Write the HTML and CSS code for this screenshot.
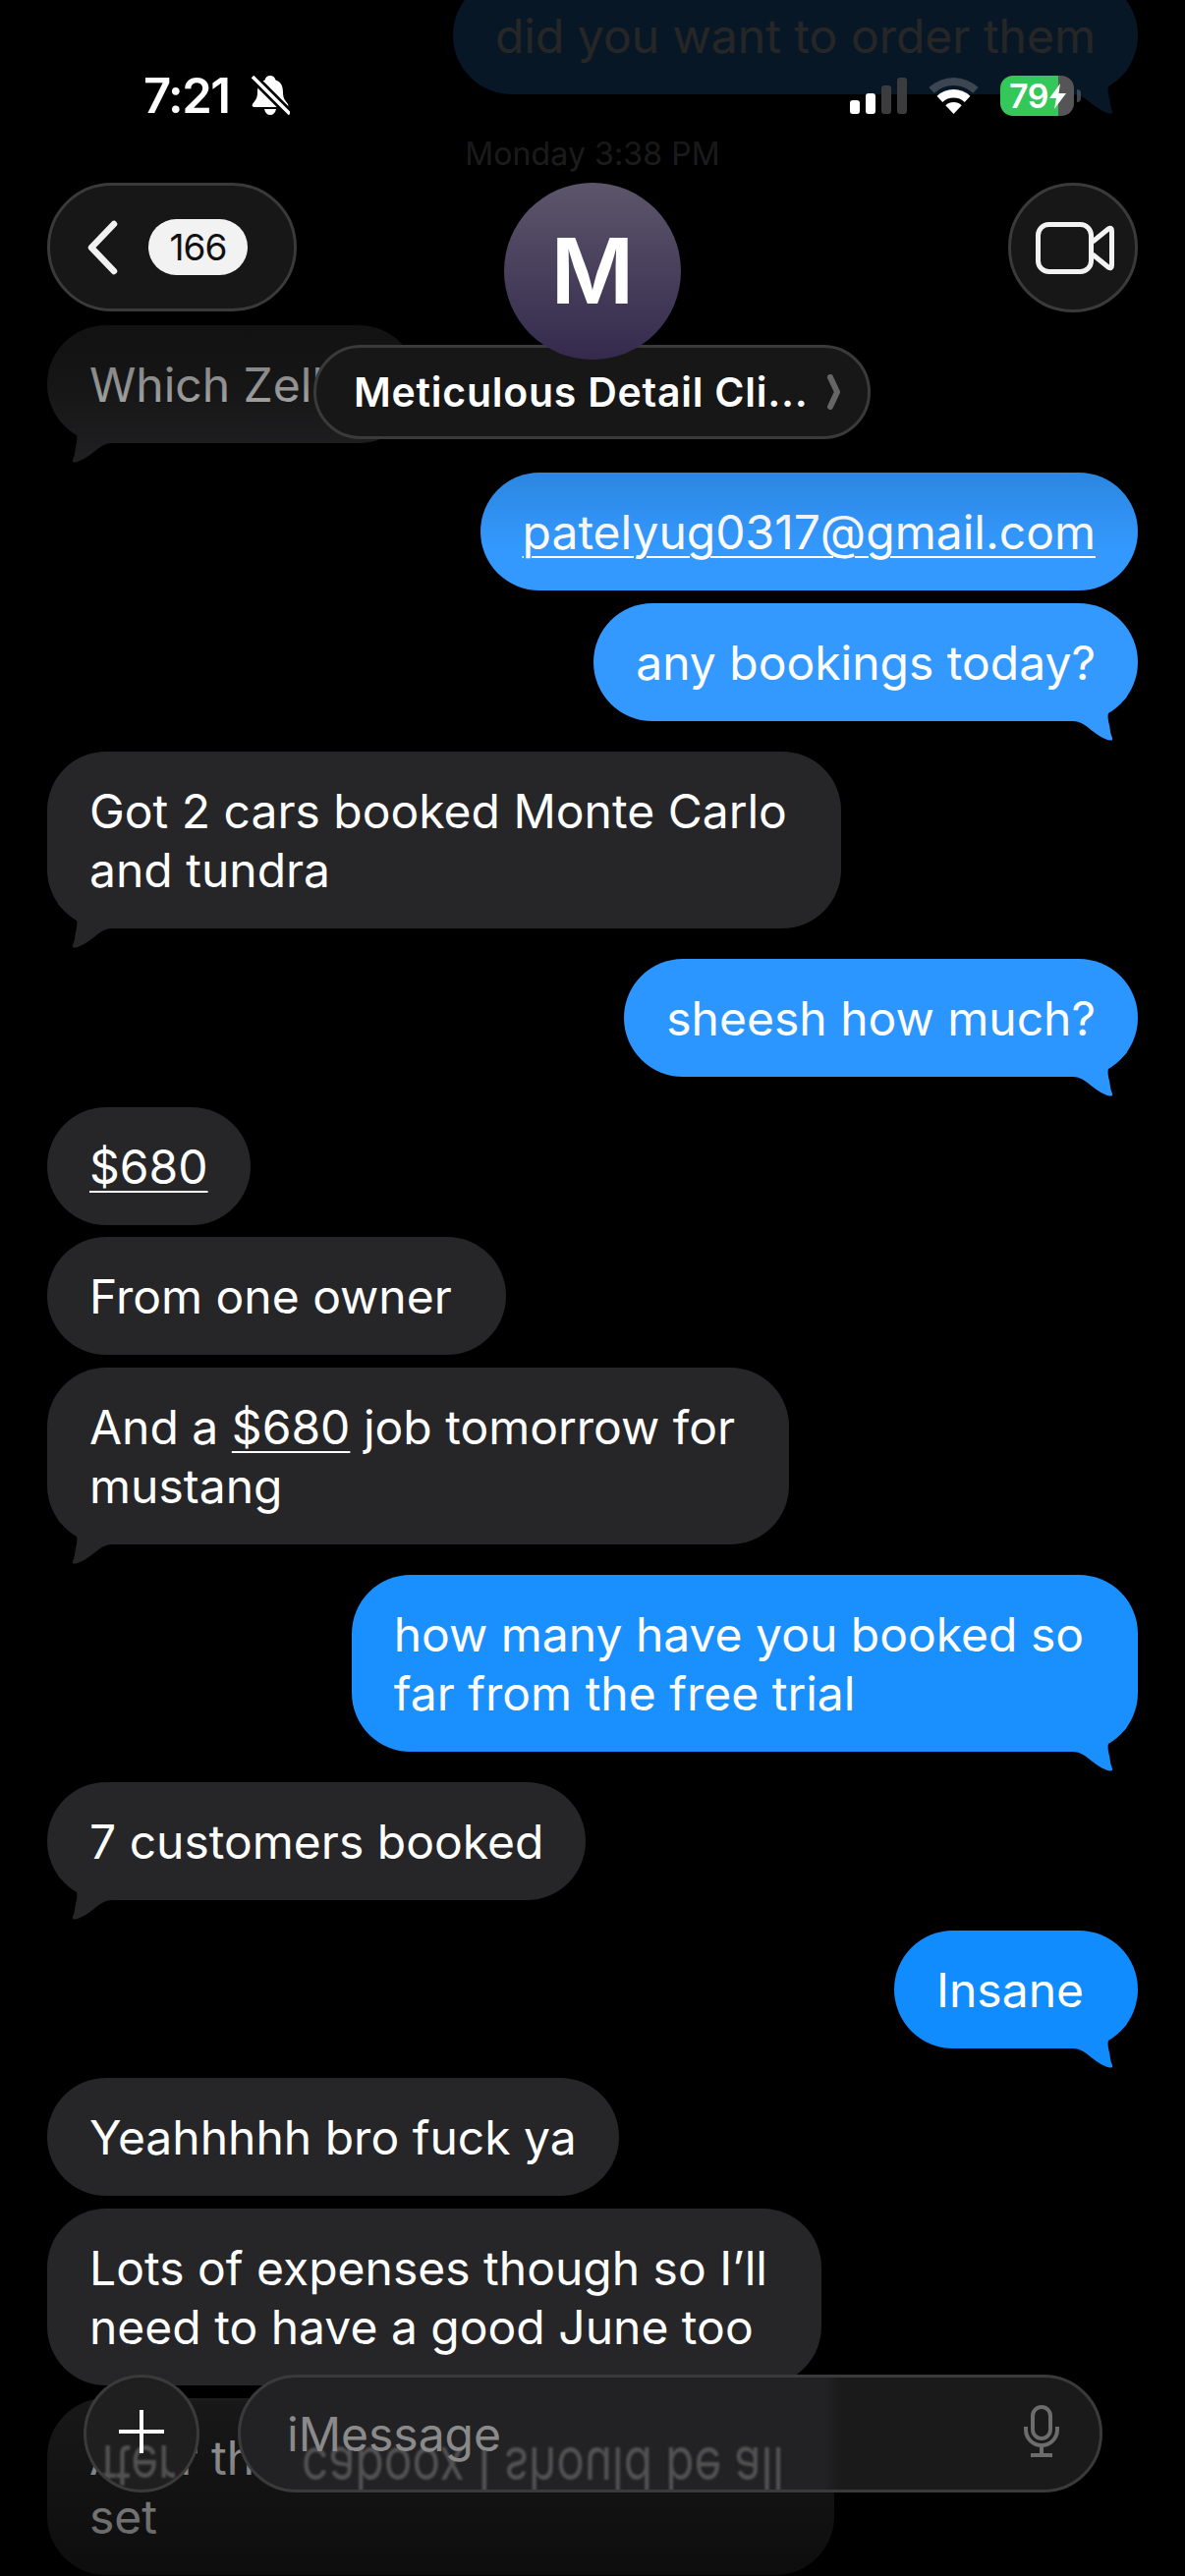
FILE: index.html
```html
<!DOCTYPE html>
<html lang="en">
<head>
  <meta charset="UTF-8">
  <title>Messages</title>
  <meta name="viewport" content="width=device-width,initial-scale=1">
  <link rel="stylesheet" href="styles.css">
</head>
<body>
<svg class="defs" width="0" height="0">
  <symbol id="tail" viewBox="0 0 80 60">
    <path d="M11 13C17 21 24 22 28 26C32 30 30 38 29 42C28 47 28 51 26 55Q25 58 29 57.500C36 56 44 50 50 45C55 41 60 38 66 38V0H11Z"/>
  </symbol>
</svg>
<div class="screen">

<main class="thread">
  <div class="msg out tone-1 first">did you want to order them<svg class="tail"><use href="#tail"/></svg></div>
  <div class="stamp">Monday 3:38 PM</div>
  <div class="msg in zelle">Which Zelle?<svg class="tail"><use href="#tail"/></svg></div>
  <div class="msg out tone-1 group"><a href="#">patelyug0317@gmail.com</a></div>
  <div class="msg out tone-1">any bookings today?<svg class="tail"><use href="#tail"/></svg></div>
  <div class="msg in wide group">Got 2 cars booked Monte Carlo<br>and tundra<svg class="tail"><use href="#tail"/></svg></div>
  <div class="msg out tone-2 group">sheesh how much?<svg class="tail"><use href="#tail"/></svg></div>
  <div class="msg in group"><a href="#">$680</a></div>
  <div class="msg in wide">From one owner</div>
  <div class="msg in wide">And a <a href="#">$680</a> job tomorrow for<br>mustang<svg class="tail"><use href="#tail"/></svg></div>
  <div class="msg out tone-3 wide group">how many have you booked so<br>far from the free trial<svg class="tail"><use href="#tail"/></svg></div>
  <div class="msg in group">7 customers booked<svg class="tail"><use href="#tail"/></svg></div>
  <div class="msg out tone-4 wide group">Insane<svg class="tail"><use href="#tail"/></svg></div>
  <div class="msg in group">Yeahhhhh bro fuck ya</div>
  <div class="msg in wide">Lots of expenses though so I’ll<br>need to have a good June too</div>
  <div class="msg in wide">After the caboox I should be all<br>set</div>
</main>

<div class="fade-top"></div>
<div class="fade-bottom"></div>

<header class="top">
  <div class="status">
    <span class="time">7:21</span>
    <svg class="bell" viewBox="0 0 39 41">
      <path fill="#fff" d="M19 0c3 0 5 2 5.500 4.500C30 6 32 11 32 17c0 6 2 8 5 12c1 2 0 3-2 3H3c-2 0-3-1-2-3C4 25 6 23 6 17C6 11 8 6 13.500 4.500C14 2 16 0 19 0Z"/>
      <path fill="#fff" d="M13 34h12c-1 4-3 6-6 6s-5-2-6-6Z"/>
      <path stroke="#000" stroke-width="9" d="M1 1L39 39"/>
      <path stroke="#fff" stroke-width="3.500" d="M1 1L39 39"/>
    </svg>
    <div class="status-right">
      <svg class="signal" viewBox="0 0 58 37">
        <rect x="0" y="23" width="10" height="14" rx="3" fill="#fff"/>
        <rect x="16" y="16" width="10" height="21" rx="3" fill="#fff"/>
        <rect x="32" y="8" width="10" height="29" rx="3" fill="#3c3c3e"/>
        <rect x="48" y="0" width="10" height="37" rx="3" fill="#3c3c3e"/>
      </svg>
      <svg class="wifi" viewBox="0 0 51 37">
        <path fill="#3c4650" d="M.3 10A37 37 0 0 1 50.700 10L45.300 15.800A29 29 0 0 0 5.700 15.800Z"/>
        <path fill="#fff" d="M8.500 18.700A25 25 0 0 1 42.500 18.700L36.750 24.900A16.500 16.500 0 0 0 14.250 24.900Z"/>
        <path fill="#fff" d="M17.300 28.200A12 12 0 0 1 33.700 28.200L25.500 37Z"/>
      </svg>
      <div class="battery">
        <span>79</span>
        <svg class="bolt" viewBox="0 0 17 26"><path fill="#fff" d="M11 0L0 15H7L5 26L17 10H9.500Z"/></svg>
      </div>
      <i class="nub"></i>
    </div>
  </div>

  <nav class="nav">
    <a class="back" href="#">
      <svg class="chev" viewBox="0 0 33 56"><path d="M28 4L5 28L28 52"/></svg>
      <span class="badge">166</span>
    </a>
    <a class="video" href="#">
      <svg viewBox="0 0 80 53"><rect x="2.500" y="2.500" width="54" height="48" rx="11"/><path d="M58 20L74 7q3.500-2 3.500 2V44q0 4-3.500 2L58 33"/></svg>
    </a>
  </nav>

  <div class="contact">
    <div class="name-pill">
      <span>Meticulous Detail Cli...</span>
      <svg class="name-chev" viewBox="0 0 17 36"><path d="M5 3L12 18L5 33"/></svg>
    </div>
    <div class="avatar">M</div>
  </div>
</header>

<footer class="composer">
  <button class="plus">
    <span class="mirror plus-mirror">fter</span>
    <svg viewBox="0 0 46 44"><path d="M23 0V44M0 22H46"/></svg>
  </button>
  <div class="input">
    <span class="mirror input-mirror">caboox I should be all</span>
    <span class="placeholder">iMessage</span>
    <svg class="mic" viewBox="0 0 36 53">
      <rect x="9" y="2" width="18" height="32" rx="9"/>
      <path d="M2 22v3a16 16 0 0 0 32 0v-3M18 41v9M7 51H29"/>
    </svg>
  </div>
</footer>

</div>
</body>
</html>
```

FILE: styles.css
```css
html, body {
  margin: 0;
  background: #000;
}
.defs {
  position: absolute;
}
.screen {
  position: relative;
  width: 1206px;
  height: 2622px;
  overflow: hidden;
  font-family: Inter, "Liberation Sans", sans-serif;
  color: #fff;
}

/* thread */
.thread {
  display: flex;
  flex-direction: column;
  gap: 12.800px;
  margin-top: -24px;
  padding: 0 48px;
}
.msg {
  --bubble: #262628;
  position: relative;
  align-self: flex-start;
  padding: 31px 43px 29px;
  border-radius: 60px;
  background: var(--bubble);
  font-size: 48px;
  line-height: 60px;
  white-space: nowrap;
}
.msg.wide {
  padding-right: 55px;
}
.msg a {
  color: inherit;
  text-underline-offset: 7px;
  text-decoration-thickness: 2px;
}
.msg .tail {
  position: absolute;
  left: 0;
  bottom: -22px;
  width: 80px;
  height: 60px;
  fill: var(--bubble);
}
.msg.out {
  align-self: flex-end;
}
.msg.out .tail {
  left: auto;
  right: 0;
  transform: scaleX(-1);
}
/* sent bubbles get deeper further down the screen */
.tone-1 { --bubble: #3399ff; }
.tone-2 { --bubble: #2b96ff; }
.tone-3 { --bubble: #1a90ff; }
.tone-4 { --bubble: #108cff; }
.group {
  margin-top: 18px;
}
.stamp {
  margin: 28px 0 141px;
  text-align: center;
  font-size: 32px;
  line-height: 40px;
  letter-spacing: .1px;
  color: #8e8e93;
}

/* top and bottom dimming */
.fade-top {
  position: absolute;
  top: 0;
  left: 0;
  right: 0;
  height: 560px;
  background: linear-gradient(rgba(0,0,0,.85) 0, rgba(0,0,0,.85) 137px, rgba(0,0,0,.44) 390px, rgba(0,0,0,.12) 482px, rgba(0,0,0,0) 560px);
}
.fade-bottom {
  position: absolute;
  bottom: 0;
  left: 0;
  right: 0;
  height: 192px;
  background: linear-gradient(rgba(0,0,0,0) 0, rgba(0,0,0,.38) 16px, rgba(0,0,0,.65) 100%);
}

/* header */
.top {
  position: absolute;
  top: 0;
  left: 0;
  right: 0;
}
.status {
  display: flex;
  align-items: center;
  height: 41px;
  padding: 77px 106px 0 146px;
}
.time {
  font-size: 49px;
  font-weight: 600;
  letter-spacing: -1.5px;
}
.bell {
  width: 39px;
  height: 41px;
  margin-left: 23px;
}
.status-right {
  display: flex;
  align-items: center;
  margin-left: auto;
}
.signal {
  width: 58px;
  height: 37px;
}
.wifi {
  width: 51px;
  height: 37px;
  margin: 0 22px;
}
.battery {
  display: flex;
  align-items: center;
  box-sizing: border-box;
  width: 75px;
  height: 41px;
  padding-left: 9px;
  border-radius: 13px;
  background: linear-gradient(90deg, #34c759 79%, #555 79%);
  font-size: 34px;
  font-weight: 600;
  letter-spacing: -.5px;
}
.bolt {
  width: 17px;
  height: 26px;
  margin-left: 1px;
}
.nub {
  width: 4px;
  height: 13px;
  margin-left: 3px;
  border-radius: 0 4px 4px 0;
  background: #3c4650;
}
.nav {
  display: flex;
  justify-content: space-between;
  align-items: flex-start;
  margin-top: 68px;
  padding: 0 48px;
}
.back, .video, .name-pill, .plus, .input {
  box-sizing: border-box;
  border: 3px solid #3a3a3b;
  background: #171717;
}
.back {
  display: flex;
  align-items: center;
  gap: 30px;
  width: 254px;
  height: 131px;
  padding-left: 37px;
  border-radius: 66px;
  text-decoration: none;
}
.chev {
  width: 33px;
  height: 56px;
  fill: none;
  stroke: #f2f2f2;
  stroke-width: 6.500;
  stroke-linecap: round;
  stroke-linejoin: round;
}
.badge {
  width: 101px;
  height: 57px;
  border-radius: 29px;
  background: #f2f2f2;
  color: #111;
  font-size: 37px;
  line-height: 57px;
  letter-spacing: -1px;
  text-align: center;
}
.video {
  display: flex;
  align-items: center;
  justify-content: center;
  width: 132px;
  height: 132px;
  border-radius: 50%;
}
.video svg {
  width: 80px;
  height: 53px;
  margin-left: 4px;
  fill: none;
  stroke: #f2f2f2;
  stroke-width: 5;
  stroke-linejoin: round;
}
.contact {
  position: absolute;
  top: 186px;
  left: 319px;
  width: 567px;
  height: 261px;
}
.avatar {
  position: absolute;
  top: 0;
  left: 194px;
  width: 180px;
  height: 180px;
  border-radius: 50%;
  background: linear-gradient(#5c566b, #352a4d);
  font-size: 92px;
  font-weight: 600;
  line-height: 180px;
  text-align: center;
}
.name-pill {
  position: absolute;
  left: 0;
  right: 0;
  bottom: 0;
  display: flex;
  align-items: center;
  justify-content: space-between;
  height: 96px;
  padding: 0 26px 0 38px;
  border-radius: 48px;
  font-size: 41px;
  font-weight: 600;
  letter-spacing: .75px;
  white-space: nowrap;
}
.name-chev {
  width: 17px;
  height: 36px;
  fill: none;
  stroke: #666;
  stroke-width: 6;
  stroke-linecap: round;
  stroke-linejoin: round;
}

/* composer */
.composer {
  position: absolute;
  top: 2417px;
  left: 85px;
  display: flex;
  gap: 39px;
}
.plus {
  position: relative;
  display: flex;
  align-items: center;
  justify-content: center;
  overflow: hidden;
  width: 118px;
  height: 120px;
  padding: 0;
  border-radius: 50%;
  background: #1f1f20;
  font-family: inherit;
}
.plus svg {
  position: relative;
  width: 46px;
  height: 44px;
  margin-top: -4px;
  fill: none;
  stroke: #fff;
  stroke-width: 4;
}
.input {
  position: relative;
  display: flex;
  align-items: center;
  justify-content: space-between;
  overflow: hidden;
  width: 880px;
  height: 120px;
  padding: 0 41px 0 47px;
  border-radius: 60px;
  background: linear-gradient(90deg, #222224 68%, #1a1a1b 70%);
}
.placeholder {
  position: relative;
  font-size: 48px;
  color: #8a8a8a;
}
.mic {
  position: relative;
  width: 36px;
  height: 53px;
  margin-top: -6px;
  fill: none;
  stroke: #6c6c6c;
  stroke-width: 4;
}
.mirror {
  position: absolute;
  font-size: 48px;
  line-height: 60px;
  white-space: nowrap;
  color: #525252;
  transform-origin: left center;
  transform: scale(.995, -1.25);
  filter: blur(1px);
}
.input-mirror {
  top: 62px;
  left: 62px;
}
.plus-mirror {
  top: 60px;
  left: 14px;
}
```
